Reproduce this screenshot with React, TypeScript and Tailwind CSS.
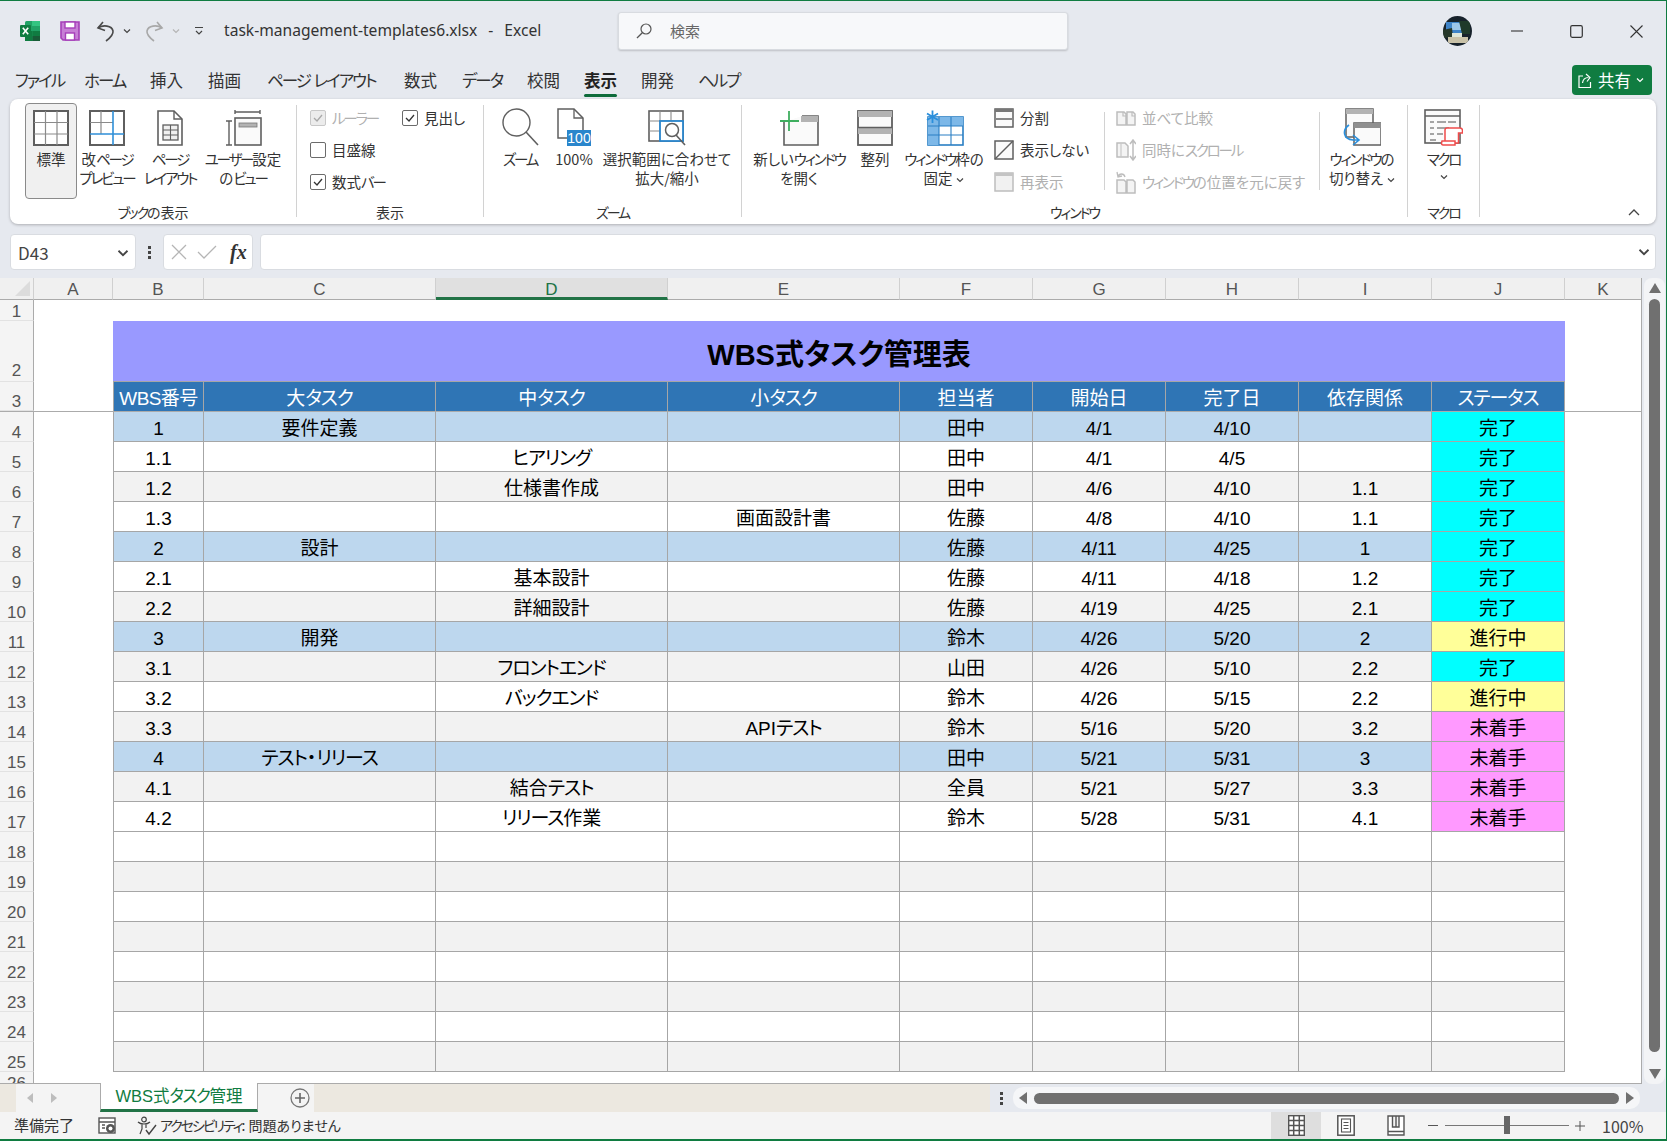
import type { ReactNode } from "react";

const widths = "grid grid-cols-[34px_79px_91px_232px_232px_232px_133px_133px_133px_133px_133px_77px]";
const cols = ["A", "B", "C", "D", "E", "F", "G", "H", "I", "J", "K"];
const heads = ["WBS番号", "大タスク", "中タスク", "小タスク", "担当者", "開始日", "完了日", "依存関係", "ステータス"];

const rows: { cells: string[]; blue?: boolean }[] = [
  { cells: ["1", "要件定義", "", "", "田中", "4/1", "4/10", "", "完了"], blue: true },
  { cells: ["1.1", "", "ヒアリング", "", "田中", "4/1", "4/5", "", "完了"] },
  { cells: ["1.2", "", "仕様書作成", "", "田中", "4/6", "4/10", "1.1", "完了"] },
  { cells: ["1.3", "", "", "画面設計書", "佐藤", "4/8", "4/10", "1.1", "完了"] },
  { cells: ["2", "設計", "", "", "佐藤", "4/11", "4/25", "1", "完了"], blue: true },
  { cells: ["2.1", "", "基本設計", "", "佐藤", "4/11", "4/18", "1.2", "完了"] },
  { cells: ["2.2", "", "詳細設計", "", "佐藤", "4/19", "4/25", "2.1", "完了"] },
  { cells: ["3", "開発", "", "", "鈴木", "4/26", "5/20", "2", "進行中"], blue: true },
  { cells: ["3.1", "", "フロントエンド", "", "山田", "4/26", "5/10", "2.2", "完了"] },
  { cells: ["3.2", "", "バックエンド", "", "鈴木", "4/26", "5/15", "2.2", "進行中"] },
  { cells: ["3.3", "", "", "APIテスト", "鈴木", "5/16", "5/20", "3.2", "未着手"] },
  { cells: ["4", "テスト・リリース", "", "", "田中", "5/21", "5/31", "3", "未着手"], blue: true },
  { cells: ["4.1", "", "結合テスト", "", "全員", "5/21", "5/27", "3.3", "未着手"] },
  { cells: ["4.2", "", "リリース作業", "", "鈴木", "5/28", "5/31", "4.1", "未着手"] },
  ...Array.from({ length: 8 }, () => ({ cells: ["", "", "", "", "", "", "", "", ""] })),
];

function statusBg(s: string) {
  if (s === "完了") return "bg-[#00ffff]";
  if (s === "進行中") return "bg-[#ffff99]";
  if (s === "未着手") return "bg-[#ff99ff]";
  return "";
}

// the original UI font sets katakana much narrower than Noto does
function K({ text, cls = "tracking-[-0.15em]" }: { text: string; cls?: string }) {
  return (
    <>
      {text.split(/([ァ-ヶー]+)/).map((part, i) =>
        i % 2 === 1 ? (
          <span key={i} className={cls}>
            {part}
          </span>
        ) : (
          part
        ),
      )}
    </>
  );
}

function Chevron({ className = "", size = 8, color = "#444" }: { className?: string; size?: number; color?: string }) {
  return (
    <svg width={size} height={size} viewBox="0 0 8 8" className={className}>
      <path d="M1 2.5 L4 5.5 L7 2.5" fill="none" stroke={color} strokeWidth="1.2" />
    </svg>
  );
}

/* ---- title bar icons ---- */
function ExcelLogo() {
  return (
    <svg width="20" height="20" viewBox="0 0 20 20">
      <rect x="5" y="0" width="15" height="20" rx="1.5" fill="#21a366" />
      <rect x="12" y="0" width="8" height="5" fill="#33c481" />
      <rect x="12" y="5" width="8" height="5" fill="#21a366" />
      <rect x="5" y="10" width="7.5" height="10" fill="#107c41" />
      <rect x="12.5" y="10" width="7.5" height="5" fill="#107c41" />
      <rect x="12.5" y="15" width="7.5" height="5" fill="#185c37" />
      <rect x="0" y="4" width="11" height="12" rx="1" fill="#107c41" />
      <path d="M2.8 6.8 L8.2 13.2 M8.2 6.8 L2.8 13.2" stroke="#fff" strokeWidth="1.6" />
    </svg>
  );
}

function SaveIcon() {
  return (
    <svg width="20" height="20" viewBox="0 0 20 20">
      <path d="M1 1 H19 V19 H3 L1 17 Z" fill="#c77fd6" stroke="#a63fb9" strokeWidth="1.6" />
      <rect x="5" y="1" width="10" height="6" fill="#fff" stroke="#a63fb9" strokeWidth="1.4" />
      <rect x="5.5" y="12" width="9" height="7" fill="#fff" stroke="#a63fb9" strokeWidth="1.4" />
    </svg>
  );
}

function UndoIcon({ color, flip = false }: { color: string; flip?: boolean }) {
  return (
    <svg width="19" height="21" viewBox="0 0 19 21" className={flip ? "-scale-x-100" : ""}>
      <path d="M7 1 L2 7 L9 9.5" fill="none" stroke={color} strokeWidth="1.6" />
      <path d="M2 7 C7 3.5 16 4.5 17 10 C17.6 14 14 17 10 20" fill="none" stroke={color} strokeWidth="1.6" />
    </svg>
  );
}

function Avatar() {
  return (
    <svg width="29" height="30" viewBox="0 0 29 30">
      <defs>
        <clipPath id="av">
          <ellipse cx="14.5" cy="15" rx="14.5" ry="15" />
        </clipPath>
      </defs>
      <g clipPath="url(#av)">
        <rect width="29" height="30" fill="#17222b" />
        <rect x="3" y="6" width="22" height="12" fill="#3f84c8" />
        <rect x="9" y="7" width="9" height="7" fill="#9cc6e8" />
        <path d="M16 5 L27 5 L27 18 L19 18 Z" fill="#1f3a2a" />
        <path d="M0 14 L9 12 L10 21 L0 22 Z" fill="#26382a" />
        <rect x="5" y="21" width="20" height="6" fill="#c9c2a8" />
        <rect x="9" y="17" width="10" height="4" fill="#dfe6d9" />
      </g>
    </svg>
  );
}

function TitleBar() {
  return (
    <div className="flex h-[60px] shrink-0 items-center">
      <div className="ml-[20px] w-[40px]">
        <ExcelLogo />
      </div>
      <SaveIcon />
      <div className="ml-[16px]">
        <UndoIcon color="#4a4a4a" />
      </div>
      <Chevron className="ml-[8px]" />
      <div className="ml-[14px]">
        <UndoIcon color="#a8a8a8" flip />
      </div>
      <Chevron className="ml-[8px]" color="#b5b5b5" />
      <svg width="10" height="10" viewBox="0 0 10 10" className="ml-[14px]">
        <path d="M1 1.5 H9 M2 5 L5 8 L8 5" fill="none" stroke="#444" strokeWidth="1.2" />
      </svg>
      <div className="ml-[20px] flex w-[394px] gap-[11px] font-['Noto_Sans','Noto_Sans_CJK_JP',sans-serif] text-[15.6px] whitespace-nowrap text-[#333]">
        <span>task-management-templates6.xlsx</span>
        <span>-</span>
        <span>Excel</span>
      </div>
      <div className="flex h-[38px] w-[450px] items-center rounded-[3px] border border-[#d8dbe0] bg-[#f7f8fa] pl-[16px] text-[15px] text-[#666] shadow-[0_1px_2px_rgba(0,0,0,0.18)]">
        <svg width="18" height="18" viewBox="0 0 18 18">
          <circle cx="11" cy="7" r="5" fill="none" stroke="#555" strokeWidth="1.2" />
          <path d="M7.3 10.7 L2 16" stroke="#555" strokeWidth="1.3" />
        </svg>
        <span className="ml-[17px]">検索</span>
      </div>
      <div className="ml-[375px]">
        <Avatar />
      </div>
      <svg width="12" height="12" viewBox="0 0 12 12" className="ml-[39px]">
        <path d="M0 6 H12" stroke="#333" strokeWidth="1.1" />
      </svg>
      <svg width="13" height="13" viewBox="0 0 13 13" className="ml-[47px]">
        <rect x="0.7" y="0.7" width="11.6" height="11.6" rx="1.5" fill="none" stroke="#333" strokeWidth="1.2" />
      </svg>
      <svg width="13" height="13" viewBox="0 0 13 13" className="ml-[47px]">
        <path d="M0.5 0.5 L12.5 12.5 M12.5 0.5 L0.5 12.5" stroke="#333" strokeWidth="1.1" />
      </svg>
    </div>
  );
}

function MenuTabs() {
  const tabs: [string, string][] = [
    ["ファイル", "w-[69px]"],
    ["ホーム", "w-[66px]"],
    ["挿入", "w-[58px]"],
    ["描画", "w-[59px]"],
    ["ページ レイアウト", "w-[137px]"],
    ["数式", "w-[58px]"],
    ["データ", "w-[65px]"],
    ["校閲", "w-[57px]"],
  ];
  return (
    <div className="flex h-[38px] shrink-0 items-center pl-[15px] text-[16.5px] whitespace-nowrap text-[#333]">
      {tabs.map(([t, w]) => (
        <span key={t} className={`shrink-0 ${w}`}>
          <K text={t} cls="tracking-[-0.12em]" />
        </span>
      ))}
      <span className="w-[57px] shrink-0">
        <span className="relative inline-block font-bold text-[#222]">
          表示
          <span className="absolute top-[26px] right-0 left-0 h-[3px] rounded-sm bg-[#0e6b3b]" />
        </span>
      </span>
      <span className="w-[57px] shrink-0">開発</span>
      <span className="shrink-0">
        <K text="ヘルプ" cls="tracking-[-0.12em]" />
      </span>
      <div className="mr-[14px] ml-auto flex h-[30px] w-[80px] shrink-0 items-center rounded-[4px] bg-[#107c41] pl-[6px] text-white">
        <svg width="15" height="17" viewBox="0 0 15 17">
          <path d="M5 4 H1 V15.5 H12.5 V10" fill="none" stroke="#fff" strokeWidth="1.2" />
          <path d="M4.5 11 C5 7 7 5.5 10.5 5.5 M8 2 L12 5.5 L9 9.5" fill="none" stroke="#fff" strokeWidth="1.2" />
        </svg>
        <span className="ml-[5px] text-[16.5px]">共有</span>
        <Chevron className="ml-[5px]" color="#fff" />
      </div>
    </div>
  );
}

/* ---- ribbon icons ---- */
const ink = "#5f5f5f";

function NormalIcon() {
  return (
    <svg width="36" height="36" viewBox="0 0 36 36">
      <rect x="1" y="1" width="34" height="34" fill="#fff" stroke={ink} strokeWidth="2" />
      <path d="M12.5 1 V35 M24 1 V35 M1 12.5 H35 M1 24 H35" stroke="#8a8a8a" strokeWidth="1.2" />
    </svg>
  );
}

function BreakPreviewIcon() {
  return (
    <svg width="36" height="36" viewBox="0 0 36 36">
      <rect x="1" y="1" width="34" height="34" fill="#fff" stroke={ink} strokeWidth="2" />
      <path d="M12 1 V24 M1 12.5 H24" stroke="#8a8a8a" strokeWidth="1.2" />
      <path d="M24 1 V35 M1 24 H35" stroke="#2f8fd8" strokeWidth="1.6" />
    </svg>
  );
}

function PageLayoutIcon() {
  return (
    <svg width="26" height="36" viewBox="0 0 26 36">
      <path d="M1 1 H17 L25 9 V35 H1 Z" fill="#fff" stroke={ink} strokeWidth="1.6" />
      <path d="M17 1 V9 H25" fill="none" stroke={ink} strokeWidth="1.4" />
      <rect x="6" y="15" width="15" height="15" fill="#f0f0f0" stroke={ink} strokeWidth="1.3" />
      <path d="M13.5 15 V30 M6 20 H21 M6 25 H21" stroke={ink} strokeWidth="1.1" />
    </svg>
  );
}

function CustomViewIcon() {
  return (
    <svg width="37" height="37" viewBox="0 0 37 37">
      <path d="M10 1 V5 M35 1 V5 M10 3 H35" stroke={ink} strokeWidth="1.4" fill="none" />
      <path d="M1 12 H7 M1 36 H7 M4 12 V36" stroke={ink} strokeWidth="1.4" fill="none" />
      <rect x="10" y="9" width="26" height="27" fill="#fafafa" stroke={ink} strokeWidth="1.6" />
      <rect x="14" y="14" width="18" height="4" fill="#b3b3b3" stroke="#777" strokeWidth="0.8" />
    </svg>
  );
}

function ZoomIcon() {
  return (
    <svg width="37" height="38" viewBox="0 0 37 38">
      <circle cx="14.5" cy="14.5" r="13.5" fill="#fff" stroke={ink} strokeWidth="1.4" />
      <path d="M24 24 L36 37" stroke={ink} strokeWidth="1.6" />
    </svg>
  );
}

function HundredIcon() {
  return (
    <svg width="34" height="38" viewBox="0 0 34 38">
      <path d="M1 1 H17 L26 10 V30 H1 Z" fill="#fff" stroke={ink} strokeWidth="1.5" />
      <path d="M17 1 V10 H26" fill="none" stroke={ink} strokeWidth="1.3" />
      <rect x="10" y="22" width="24" height="16" fill="#2a86cc" />
      <text x="22" y="35" fontSize="14" textAnchor="middle" fill="#fff" fontFamily="Liberation Sans, sans-serif">
        100
      </text>
    </svg>
  );
}

function FitIcon() {
  return (
    <svg width="38" height="36" viewBox="0 0 38 36">
      <rect x="1" y="1" width="34" height="30" fill="#fff" stroke={ink} strokeWidth="1.6" />
      <path d="M12 1 V31 M23 1 V11 M1 11 H35 M1 21 H12" stroke="#8a8a8a" strokeWidth="1.1" />
      <rect x="12" y="11" width="23" height="20" fill="#fff" stroke="#2a86cc" strokeWidth="1.8" />
      <circle cx="24" cy="20" r="6.5" fill="#fff" stroke={ink} strokeWidth="1.5" />
      <path d="M28 25 L37 35" stroke={ink} strokeWidth="1.6" />
    </svg>
  );
}

function NewWindowIcon() {
  return (
    <svg width="39" height="35" viewBox="0 0 39 35">
      <path d="M4 11 V34 H38 V5 H22" fill="#fafafa" stroke={ink} strokeWidth="1.6" />
      <rect x="21" y="5" width="17" height="6" fill="#b3b3b3" />
      <path d="M9 0 V20 M0 10 H19" stroke="#3fae5f" strokeWidth="1.8" />
    </svg>
  );
}

function ArrangeIcon() {
  return (
    <svg width="36" height="36" viewBox="0 0 36 36">
      <rect x="1" y="1" width="34" height="34" fill="#fafafa" stroke={ink} strokeWidth="1.8" />
      <rect x="1" y="1" width="34" height="6" fill="#b3b3b3" />
      <rect x="1" y="18" width="34" height="6" fill="#b3b3b3" />
      <path d="M1 17.5 H35" stroke={ink} strokeWidth="1.4" />
    </svg>
  );
}

function FreezeIcon() {
  return (
    <svg width="39" height="36" viewBox="0 0 39 36">
      <rect x="3" y="7" width="35" height="28" fill="#fff" stroke="#2a7fc4" strokeWidth="1.6" />
      <rect x="3" y="7" width="35" height="9" fill="#7db8e8" />
      <rect x="3" y="16" width="11" height="19" fill="#7db8e8" />
      <path d="M14 7 V35 M26 7 V35 M3 16 H38 M3 25 H38" stroke="#2a7fc4" strokeWidth="1.1" />
      <path d="M7.5 0.5 V13 M2 3.5 L13 10 M13 3.5 L2 10" stroke="#2a8fdc" strokeWidth="1.8" />
    </svg>
  );
}

function SplitIcon() {
  return (
    <svg width="20" height="20" viewBox="0 0 20 20">
      <rect x="1" y="1" width="18" height="18" fill="#fafafa" stroke={ink} strokeWidth="1.5" />
      <rect x="1" y="1" width="18" height="3" fill="#777" />
      <path d="M1 11 H19" stroke="#888" strokeWidth="2" />
    </svg>
  );
}

function HideIcon() {
  return (
    <svg width="20" height="20" viewBox="0 0 20 20">
      <rect x="1" y="1" width="18" height="18" fill="#fafafa" stroke={ink} strokeWidth="1.5" />
      <path d="M1 19 L19 1" stroke={ink} strokeWidth="1.4" />
    </svg>
  );
}

function UnhideIcon() {
  return (
    <svg width="20" height="20" viewBox="0 0 20 20">
      <rect x="1" y="1" width="18" height="18" fill="#f1f1f1" stroke="#bdbdbd" strokeWidth="1.5" />
      <rect x="1" y="1" width="18" height="3" fill="#c4c4c4" />
    </svg>
  );
}

function CompareIcon() {
  return (
    <svg width="20" height="16" viewBox="0 0 20 16">
      <path d="M1 2 H8 L10 4 V15 H1 Z M11 2 H17 L19 4 V15 H11 Z" fill="#f4f4f4" stroke="#bdbdbd" strokeWidth="1.5" />
      <path d="M7 2 V6 H10 M16 2 V6 H19" fill="none" stroke="#bdbdbd" strokeWidth="1.2" />
    </svg>
  );
}

function SyncIcon() {
  return (
    <svg width="20" height="22" viewBox="0 0 20 22">
      <path d="M1 4 H9 L12 7 V18 H1 Z" fill="#f4f4f4" stroke="#bdbdbd" strokeWidth="1.5" />
      <path d="M5 4 V18" stroke="#c8c8c8" strokeWidth="1.2" />
      <path d="M17 1 V21 M14 5 L17 1 L20 5 M14 17 L17 21 L20 17" fill="none" stroke="#bdbdbd" strokeWidth="1.5" />
    </svg>
  );
}

function ResetIcon() {
  return (
    <svg width="20" height="23" viewBox="0 0 20 23">
      <path d="M1 9 H8 L10 11 V22 H1 Z M11 9 H17 L19 11 V22 H11 Z" fill="#f4f4f4" stroke="#bdbdbd" strokeWidth="1.5" />
      <path d="M2 6 C3 2 8 2 9 6 M1 1 L2 6 L6 5" fill="none" stroke="#bdbdbd" strokeWidth="1.3" />
    </svg>
  );
}

function SwitchIcon() {
  return (
    <svg width="38" height="38" viewBox="0 0 38 38">
      <rect x="3" y="1" width="27" height="28" fill="#fafafa" stroke={ink} strokeWidth="1.5" />
      <rect x="3" y="1" width="27" height="5" fill="#b3b3b3" />
      <rect x="11" y="15" width="27" height="22" fill="#fafafa" stroke={ink} strokeWidth="1.5" />
      <rect x="11" y="15" width="27" height="5" fill="#8f8f8f" />
      <path d="M6 17 C-1 22 0 31 10 32 L15 32 M10 27 L16 32 L10 37" fill="none" stroke="#2a8fdc" strokeWidth="1.6" />
    </svg>
  );
}

function MacroIcon() {
  return (
    <svg width="39" height="37" viewBox="0 0 39 37">
      <rect x="1" y="1" width="35" height="33" fill="#fafafa" stroke={ink} strokeWidth="1.6" />
      <path d="M1 7 H36" stroke={ink} strokeWidth="1.3" />
      <path d="M6 13 H10 M13 13 H22 M24 13 H32 M6 19 H10 M13 19 H25 M6 25 H10 M13 25 H19 M6 31 H12" stroke="#888" strokeWidth="1.4" />
      <path d="M21 21 C21 19.5 22 19 23 19 H36 C37.5 19 38.5 20 38.5 21.5 V24 H34.5 V34 H21 Z" fill="#fff" stroke="#f04b4b" strokeWidth="1.5" />
      <path d="M18 32 H31 V36 H19 C18 36 17.5 35 17.5 34 Z" fill="#fff" stroke="#f04b4b" strokeWidth="1.5" />
    </svg>
  );
}

/* ---- ribbon parts ---- */
function Large({
  icon,
  lines,
  className,
  active,
  chevron,
}: {
  icon: ReactNode;
  lines: string[];
  className: string;
  active?: boolean;
  chevron?: boolean;
}) {
  return (
    <div
      className={`flex shrink-0 flex-col items-center pt-[5px] text-[14.5px] leading-[19px] text-[#333] ${className} ${
        active ? "h-[96px] rounded-[4px] border border-[#8a8a8a] bg-[#f0f0f0]" : "border border-transparent"
      }`}
    >
      <div className="flex h-[37px] items-end">{icon}</div>
      <div className="mt-[3px] text-center whitespace-nowrap">
        {lines.map((l, i) => (
          <div key={l}>
            <K text={l} />
            {chevron && i === lines.length - 1 ? <Chevron className="ml-[4px] inline" size={8} /> : null}
          </div>
        ))}
      </div>
    </div>
  );
}

function Check({ label, checked, disabled, className = "" }: { label: string; checked?: boolean; disabled?: boolean; className?: string }) {
  return (
    <div className={`flex h-[32px] items-center text-[14.5px] ${disabled ? "text-[#b0b0b0]" : "text-[#333]"} ${className}`}>
      <span
        className={`flex h-[16px] w-[16px] items-center justify-center rounded-[2px] border ${
          disabled ? "border-[#c8c8c8] bg-[#ececec]" : "border-[#6b6b6b] bg-white"
        }`}
      >
        {checked ? (
          <svg width="10" height="10" viewBox="0 0 10 10">
            <path d="M1 5 L4 8 L9 2" fill="none" stroke={disabled ? "#a8a8a8" : "#333"} strokeWidth="1.3" />
          </svg>
        ) : null}
      </span>
      <span className="ml-[6px]">
        <K text={label} />
      </span>
    </div>
  );
}

function Small({ icon, label, disabled }: { icon: ReactNode; label: string; disabled?: boolean }) {
  return (
    <div className={`flex h-[32px] items-center text-[14.5px] whitespace-nowrap ${disabled ? "text-[#b0b0b0]" : "text-[#333]"}`}>
      <span className="flex w-[20px] justify-center">{icon}</span>
      <span className="ml-[6px]">
        <K text={label} />
      </span>
    </div>
  );
}

function Group({ label, className, bodyClass = "", children }: { label: string; className: string; bodyClass?: string; children: ReactNode }) {
  return (
    <div className={`flex h-[112px] shrink-0 flex-col border-r border-[#d2d2d2] ${className}`}>
      <div className={`-mt-[2px] flex h-[99px] shrink-0 items-start ${bodyClass}`}>{children}</div>
      <div className="shrink-0 text-center text-[14px] leading-[20px] whitespace-nowrap text-[#333]">
        <K text={label} />
      </div>
    </div>
  );
}

function Ribbon() {
  return (
    <div className="mx-[10px] flex h-[125px] shrink-0 rounded-lg bg-white py-[6px] shadow-[0_1px_3px_rgba(0,0,0,0.25)]">
      <Group label="ブックの表示" className="w-[287px]" bodyClass="pl-[15px]">
        <Large icon={<NormalIcon />} lines={["標準"]} className="w-[52px]" active />
        <Large icon={<BreakPreviewIcon />} lines={["改ページ", "プレビュー"]} className="w-[60px]" />
        <Large icon={<PageLayoutIcon />} lines={["ページ", "レイアウト"]} className="w-[66px]" />
        <Large icon={<CustomViewIcon />} lines={["ユーザー設定", "のビュー"]} className="w-[80px]" />
      </Group>
      <Group label="表示" className="w-[187px]" bodyClass="pl-[13px]">
        <div className="-mt-[1px] flex flex-col">
          <div className="flex">
            <Check label="ルーラー" checked disabled className="w-[92px]" />
            <Check label="見出し" checked />
          </div>
          <Check label="目盛線" />
          <Check label="数式バー" checked />
        </div>
      </Group>
      <Group label="ズーム" className="w-[258px]" bodyClass="pl-[10px]">
        <Large icon={<ZoomIcon />} lines={["ズーム"]} className="w-[52px]" />
        <Large icon={<HundredIcon />} lines={["100%"]} className="w-[56px]" />
        <Large icon={<FitIcon />} lines={["選択範囲に合わせて", "拡大/縮小"]} className="w-[130px]" />
      </Group>
      <Group label="ウィンドウ" className="w-[666px]">
        <Large icon={<NewWindowIcon />} lines={["新しいウィンドウ", "を開く"]} className="w-[114px]" />
        <Large icon={<ArrangeIcon />} lines={["整列"]} className="w-[38px]" />
        <Large icon={<FreezeIcon />} lines={["ウィンドウ枠の", "固定"]} className="w-[100px]" chevron />
        <div className="-mt-[1px] flex w-[110px] flex-col">
          <Small icon={<SplitIcon />} label="分割" />
          <Small icon={<HideIcon />} label="表示しない" />
          <Small icon={<UnhideIcon />} label="再表示" disabled />
        </div>
        <div className="mt-[9px] h-[78px] w-[1px] bg-[#d2d2d2]" />
        <div className="-mt-[1px] flex w-[214px] flex-col pl-[11px]">
          <Small icon={<CompareIcon />} label="並べて比較" disabled />
          <Small icon={<SyncIcon />} label="同時にスクロール" disabled />
          <Small icon={<ResetIcon />} label="ウィンドウの位置を元に戻す" disabled />
        </div>
        <div className="mt-[9px] h-[78px] w-[1px] bg-[#d2d2d2]" />
        <Large icon={<SwitchIcon />} lines={["ウィンドウの", "切り替え"]} className="w-[84px]" chevron />
      </Group>
      <Group label="マクロ" className="w-[72px]">
        <div className="flex w-full flex-col items-center pt-[5px] text-[14.5px] leading-[19px] text-[#333]">
          <div className="flex h-[38px] items-end">
            <MacroIcon />
          </div>
          <div className="mt-[3px]">
            <K text="マクロ" />
          </div>
          <Chevron className="mt-[5px]" />
        </div>
      </Group>
      <div className="flex flex-1 items-end justify-end pr-[16px] pb-[2px]">
        <svg width="12" height="8" viewBox="0 0 12 8">
          <path d="M1 7 L6 2 L11 7" fill="none" stroke="#444" strokeWidth="1.3" />
        </svg>
      </div>
    </div>
  );
}

function FormulaBar() {
  const box = "flex h-[36px] items-center rounded-[4px] border border-[#d9dce1] bg-white";
  return (
    <div className="mt-[10px] flex h-[36px] shrink-0 pl-[10px] pr-[10px]">
      <div className={`${box} w-[126px] justify-between pr-[6px] pl-[7px] text-[17px] text-[#444]`}>
        <span className="pt-[2px]">D43</span>
        <Chevron size={12} className="mt-[1px]" />
      </div>
      <div className="flex w-[27px] flex-col items-center justify-center gap-[2px]">
        <span className="h-[3px] w-[3px] bg-[#444]" />
        <span className="h-[3px] w-[3px] bg-[#444]" />
        <span className="h-[3px] w-[3px] bg-[#444]" />
      </div>
      <div className={`${box} w-[90px]`}>
        <svg width="16" height="16" viewBox="0 0 16 16" className="ml-[7px]">
          <path d="M1 1 L15 15 M15 1 L1 15" stroke="#b5b5b5" strokeWidth="1.3" />
        </svg>
        <svg width="20" height="16" viewBox="0 0 20 16" className="ml-[10px]">
          <path d="M1 8 L7 14 L19 2" fill="none" stroke="#b5b5b5" strokeWidth="1.3" />
        </svg>
        <span className="ml-[13px] font-['Liberation_Serif',serif] text-[20px] font-bold text-[#333] italic">fx</span>
      </div>
      <div className={`${box} ml-[7px] flex-1 justify-end pr-[5px]`}>
        <Chevron size={12} />
      </div>
    </div>
  );
}

/* ---- sheet ---- */
function RowNo({ n, className = "" }: { n: string; className?: string }) {
  return (
    <div
      className={`flex items-end justify-center border-r border-b border-r-[#ababab] border-b-[#e2e2e2] bg-[#f4f4f4] text-[17px] leading-[16px] text-[#555] ${className}`}
    >
      {n}
    </div>
  );
}

const endCell = <div className="border-r border-[#ababab]" />;

function Sheet() {
  return (
    <div className="h-[806px] w-[1642px] shrink-0 overflow-hidden border-b border-[#ababab] bg-white font-['Liberation_Sans','Noto_Sans_CJK_JP',sans-serif] text-[19px] leading-[24px] text-black">
      <div className={`${widths} h-[22px] grid-rows-[22px] bg-[#f0f0f0] text-[17px] leading-[24px] text-[#555]`}>
        <div className="flex items-end justify-end border-r border-b border-[#ababab] border-r-[#d0d0d0] pr-[3px] pb-[3px]">
          <svg width="15" height="15" viewBox="0 0 15 15">
            <path d="M15 0 V15 H0 Z" fill="#dcdcdc" />
          </svg>
        </div>
        {cols.map((c) => (
          <div
            key={c}
            className={
              c === "D"
                ? "border-r border-b-[3px] border-r-[#d0d0d0] border-b-[#217346] bg-[#e0e0e0] text-center text-[#217346]"
                : c === "K"
                  ? "border-r border-b border-r-[#ababab] border-b-[#ababab] text-center"
                  : "border-r border-b border-r-[#d0d0d0] border-b-[#ababab] text-center"
            }
          >
            {c}
          </div>
        ))}
      </div>

      <div className={`${widths} h-[21px] grid-rows-[21px]`}>
        <RowNo n="1" />
        <div className="col-span-10" />
        {endCell}
      </div>

      <div className={`${widths} h-[61px]`}>
        <RowNo n="2" className="pb-[2px]" />
        <div />
        <div className="col-span-9 flex items-center justify-center border-b border-[#a6a6a6] bg-[#9999ff] pt-[8px] text-[29px] font-bold">
          WBS式タスク管理表
        </div>
        {endCell}
      </div>

      <div className={`${widths} h-[30px] border-b border-[#ababab]`}>
        <RowNo n="3" />
        <div />
        {heads.map((h, i) => (
          <div
            key={h}
            className={`flex items-center justify-center border-r border-[#a6a6a6] bg-[#2f75b5] pt-[4px] text-white ${i === 0 ? "border-l tracking-[-0.6px]" : ""}`}
          >
            <K text={h} cls="tracking-[-0.06em]" />
          </div>
        ))}
        {endCell}
      </div>

      {rows.map((r, ri) => {
        const n = ri + 4;
        // the banding flips after the last filled row
        const shaded = n < 18 ? n % 2 === 0 : n % 2 === 1;
        const fill = r.blue ? "bg-[#bdd7ee]" : shaded ? "bg-[#f2f2f2]" : "bg-white";
        return (
          <div key={n} className={`${widths} h-[30px]`}>
            <RowNo n={String(n)} />
            <div />
            {r.cells.map((c, i) => (
              <div
                key={i}
                className={`flex items-center justify-center border-r border-b border-[#a6a6a6] pt-[5px] ${i === 0 ? "border-l" : ""} ${
                  i === 8 && c ? statusBg(c) : fill
                }`}
              >
                <K text={c} cls="tracking-[-0.06em]" />
              </div>
            ))}
            {endCell}
          </div>
        );
      })}

      <div className={`${widths} h-[30px]`}>
        <div className="border-r border-[#ababab] bg-[#f4f4f4] pt-[1px] text-center text-[17px] leading-[22px] text-[#555]">26</div>
        <div className="col-span-10" />
        {endCell}
      </div>
    </div>
  );
}

function VScroll() {
  return (
    <div className="ml-[2px] flex h-[806px] w-[21px] shrink-0 flex-col items-center rounded-[8px] bg-[#f3f4f6] pt-[5px] pb-[5px]">
      <svg width="12" height="10" viewBox="0 0 12 10">
        <path d="M6 0 L12 10 H0 Z" fill="#707070" />
      </svg>
      <div className="mt-[6px] w-[11px] flex-1 rounded-full bg-[#707070]" />
      <svg width="12" height="10" viewBox="0 0 12 10" className="mt-[17px]">
        <path d="M6 10 L12 0 H0 Z" fill="#707070" />
      </svg>
    </div>
  );
}

function TabStrip() {
  return (
    <div className="flex h-[28px] shrink-0 items-stretch">
      <div className="w-[16px] bg-[#ece8e0]" />
      <div className="flex w-[84px] items-center gap-[18px] bg-[#f4f4f4] pl-[11px]">
        <svg width="6" height="10" viewBox="0 0 6 10">
          <path d="M0 5 L6 0 V10 Z" fill="#bdbdbd" />
        </svg>
        <svg width="6" height="10" viewBox="0 0 6 10">
          <path d="M6 5 L0 0 V10 Z" fill="#bdbdbd" />
        </svg>
      </div>
      <div className="-mt-[1px] flex w-[158px] items-center justify-center border-x border-b-[3px] border-x-[#ababab] border-b-[#217346] bg-white font-['Liberation_Sans','Noto_Sans_CJK_JP',sans-serif] text-[16.5px] text-[#107c41]">
        <K text="WBS式タスク管理" cls="tracking-[-0.08em]" />
      </div>
      <div className="flex w-[56px] items-center bg-[#f4f4f4] pl-[32px]">
        <svg width="20" height="20" viewBox="0 0 20 20">
          <circle cx="10" cy="10" r="9" fill="none" stroke="#777" strokeWidth="1.3" />
          <path d="M10 5 V15 M5 10 H15" stroke="#666" strokeWidth="1.6" />
        </svg>
      </div>
      <div className="w-[676px] bg-[#ece8e0]" />
      <div className="flex w-[23px] flex-col items-center justify-center gap-[2px]">
        <span className="h-[3px] w-[3px] bg-[#444]" />
        <span className="h-[3px] w-[3px] bg-[#444]" />
        <span className="h-[3px] w-[3px] bg-[#444]" />
      </div>
      <div className="my-[3px] flex w-[627px] items-center rounded-[10px] bg-[#f5f6f8] px-[6px]">
        <svg width="8" height="12" viewBox="0 0 8 12" className="shrink-0">
          <path d="M0 6 L8 0 V12 Z" fill="#707070" />
        </svg>
        <div className="mx-[7px] h-[11px] flex-1 rounded-full bg-[#707070]" />
        <svg width="8" height="12" viewBox="0 0 8 12" className="shrink-0">
          <path d="M8 6 L0 0 V12 Z" fill="#707070" />
        </svg>
      </div>
    </div>
  );
}

function StatusBar() {
  return (
    <div className="flex h-[27px] shrink-0 items-center bg-[#f4f4f4] text-[15px] text-[#333]">
      <span className="ml-[14px]">準備完了</span>
      <svg width="19" height="18" viewBox="0 0 19 18" className="ml-[24px]">
        <rect x="1" y="1" width="16" height="15" fill="#fff" stroke="#555" strokeWidth="1.4" />
        <path d="M1 5 H17 M4 8 H7 M4 11 H7" stroke="#555" strokeWidth="1.4" />
        <circle cx="12.5" cy="11.5" r="4.5" fill="#555" />
        <circle cx="12.5" cy="11.5" r="2" fill="#fff" />
      </svg>
      <svg width="20" height="20" viewBox="0 0 20 20" className="ml-[20px]">
        <circle cx="7" cy="3.5" r="2.3" fill="none" stroke="#444" strokeWidth="1.2" />
        <path d="M1 6 C3 8 4.5 8 7 8 C9.5 8 11 8 13 6 M5 8.5 V13 L3 18 M9 8.5 V12" fill="none" stroke="#444" strokeWidth="1.2" />
        <path d="M9 14 L12 18 L19 9" fill="none" stroke="#444" strokeWidth="1.4" />
      </svg>
      <span className="ml-[3px] text-[14px]">
        <K text="アクセシビリティ: 問題ありません" />
      </span>
      <div className="ml-auto flex h-full items-center">
        <div className="flex h-full w-[50px] items-center justify-center bg-[#dedede]">
          <svg width="17" height="21" viewBox="0 0 17 21">
            <rect x="0.7" y="0.7" width="15.6" height="19.6" fill="#fff" stroke="#555" strokeWidth="1.4" />
            <path d="M5.7 1 V20 M11.3 1 V20 M1 5.5 H16 M1 10.5 H16 M1 15.5 H16" stroke="#555" strokeWidth="1.5" />
          </svg>
        </div>
        <svg width="18" height="21" viewBox="0 0 18 21" className="ml-[16px]">
          <rect x="0.8" y="0.8" width="16.4" height="19.4" fill="#fff" stroke="#555" strokeWidth="1.5" />
          <rect x="4.5" y="4" width="9" height="13" fill="none" stroke="#555" strokeWidth="1.1" />
          <path d="M6.5 7.5 H11.5 M6.5 10.5 H11.5 M6.5 13.5 H11.5" stroke="#555" strokeWidth="1" />
        </svg>
        <svg width="18" height="21" viewBox="0 0 18 21" className="ml-[32px]">
          <path d="M1 1 H17 V20 H1 Z M5.5 1 V12 H12 V1 M9 1 V12 M1 16.5 H17" fill="#fff" stroke="#555" strokeWidth="1.4" />
        </svg>
        <span className="ml-[23px] h-[1px] w-[10px] bg-[#555]" />
        <div className="relative ml-[7px] h-[1px] w-[124px] bg-[#777]">
          <span className="absolute top-[-9px] left-[59px] h-[18px] w-[6px] bg-[#666]" />
        </div>
        <svg width="10" height="10" viewBox="0 0 10 10" className="ml-[6px]">
          <path d="M5 0 V10 M0 5 H10" stroke="#555" strokeWidth="1" />
        </svg>
        <span className="mr-[24px] ml-[17px] w-[40px] text-[16px] text-[#444]">100%</span>
      </div>
    </div>
  );
}

export default function App() {
  return (
    <div className="flex h-[1141px] w-[1667px] flex-col overflow-hidden border-t border-r border-b-2 border-[#107c41] bg-[#e6e9ef] font-['Noto_Sans_CJK_JP',sans-serif] [font-feature-settings:'palt']">
      <TitleBar />
      <MenuTabs />
      <Ribbon />
      <FormulaBar />
      <div className="mt-[8px] flex h-[806px] shrink-0">
        <Sheet />
        <VScroll />
      </div>
      <TabStrip />
      <StatusBar />
    </div>
  );
}
